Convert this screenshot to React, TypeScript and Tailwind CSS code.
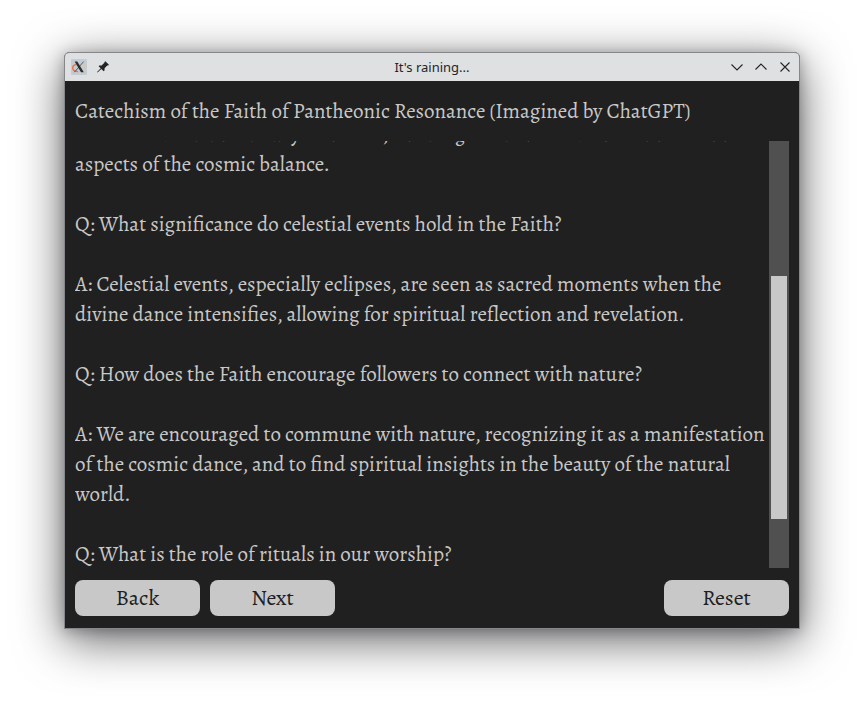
import { useState } from "react";

const TITLE = "Catechism of the Faith of Pantheonic Resonance (Imagined by ChatGPT)";

const LINES = [
  "forces of the divine vitality of nature, and its guardians to the most interconnected",
  "aspects of the cosmic balance.",
  "",
  "Q: What significance do celestial events hold in the Faith?",
  "",
  "A: Celestial events, especially eclipses, are seen as sacred moments when the",
  "divine dance intensifies, allowing for spiritual reflection and revelation.",
  "",
  "Q: How does the Faith encourage followers to connect with nature?",
  "",
  "A: We are encouraged to commune with nature, recognizing it as a manifestation",
  "of the cosmic dance, and to find spiritual insights in the beauty of the natural",
  "world.",
  "",
  "Q: What is the role of rituals in our worship?",
];

function XIcon() {
  return (
    <svg width="16" height="16" viewBox="0 0 16 16" aria-hidden="true">
      <rect width="16" height="16" rx="1" fill="#c3ccd2" />
      <path d="M5.500 5.400C2.800 6 1.400 7.600 1.800 9.600c.4 1.800 2.400 3 5.200 3" fill="none" stroke="#ee6f3c" strokeWidth="1.4" />
      <path d="M7 12.600c4.400 0 7.400-1.800 7.400-4.200 0-1.400-1-2.400-2.800-2.900" fill="none" stroke="#e8c39a" strokeWidth="1.200" />
      <path d="M12.600 2.600 3.400 13.200" stroke="#55595d" strokeWidth="1" />
      <path d="M3.600 2.600h2.700L12.800 13.200H10z" fill="#2a2d30" />
    </svg>
  );
}

function PinIcon() {
  return (
    <svg width="16" height="16" viewBox="0 0 16 16" aria-hidden="true">
      <path
        d="M10.400 2.200 13.900 5.700 13.300 6.600 12.200 6.600 9.600 9.200 9.500 11.400 8.700 12.200 6.300 9.900 2.600 13.500 2.100 13 5.700 9.300 3.600 7.200 4.300 6.400 6.600 6.400 9.400 3.800 9.500 2.900z"
        fill="#232629"
      />
    </svg>
  );
}

function WindowButton({ label, path }: { label: string; path: string }) {
  return (
    <button type="button" aria-label={label} className="flex size-4 items-center justify-center">
      <svg width="16" height="16" viewBox="0 0 16 16" fill="none" stroke="#232629" strokeWidth="1.1" aria-hidden="true">
        <path d={path} />
      </svg>
    </button>
  );
}

function ActionButton({ label, onClick }: { label: string; onClick?: () => void }) {
  return (
    <button
      type="button"
      onClick={onClick}
      className="h-9 w-[125px] rounded-lg bg-[#c8c8c8] text-[22px] leading-[30px] text-[#202020]"
    >
      {label}
    </button>
  );
}

export default function App() {
  const [, setPage] = useState(0);
  return (
    <div className="flex h-screen flex-col bg-white px-16 pt-[52px] pb-[76px]">
      <main className="flex min-h-0 flex-1 flex-col overflow-hidden rounded-t-[5px] border border-[#85878a] bg-[#202020] font-['Alegreya','Liberation_Serif',serif] text-[#c8c8c8] shadow-[0_11px_48px_rgba(0,0,0,0.62),0_2px_14px_rgba(0,0,0,0.25)]">
        <header className="grid h-7 shrink-0 grid-cols-3 items-center bg-[#dee0e2] px-1.5 font-['Noto_Sans',sans-serif] text-[#232629]">
          <div className="flex items-center gap-2">
            <XIcon />
            <PinIcon />
          </div>
          <div className="text-center text-[13px] leading-5">It's raining...</div>
          <div className="flex items-center justify-end gap-2">
            <WindowButton label="Minimize" path="M2.500 5.500 8 11l5.500-5.500" />
            <WindowButton label="Maximize" path="M2.500 10.500 8 5l5.500 5.500" />
            <WindowButton label="Close" path="m3.500 3.500 9 9m0-9-9 9" />
          </div>
        </header>

        <h1 className="shrink-0 px-2.5 py-[15px] text-[21px] leading-[30px] whitespace-pre">{TITLE}</h1>

        <section className="flex min-h-0 flex-1 px-2.5">
          <div className="flex min-w-0 flex-1 flex-col justify-end overflow-hidden">
            <p className="-mb-px text-[21px] leading-[30px] whitespace-pre">{LINES.join("\n")}</p>
          </div>
          <div className="flex w-5 shrink-0 flex-col bg-[#505050] px-0.5">
            <div className="h-[135px] shrink-0" />
            <div className="h-[243px] shrink-0 bg-[#c8c8c8]" />
          </div>
        </section>

        <footer className="flex shrink-0 gap-2.5 px-2.5 py-3">
          <ActionButton label="Back" onClick={() => setPage((p) => Math.max(0, p - 1))} />
          <ActionButton label="Next" onClick={() => setPage((p) => p + 1)} />
          <div className="flex-1" />
          <ActionButton label="Reset" onClick={() => setPage(0)} />
        </footer>
      </main>
    </div>
  );
}
